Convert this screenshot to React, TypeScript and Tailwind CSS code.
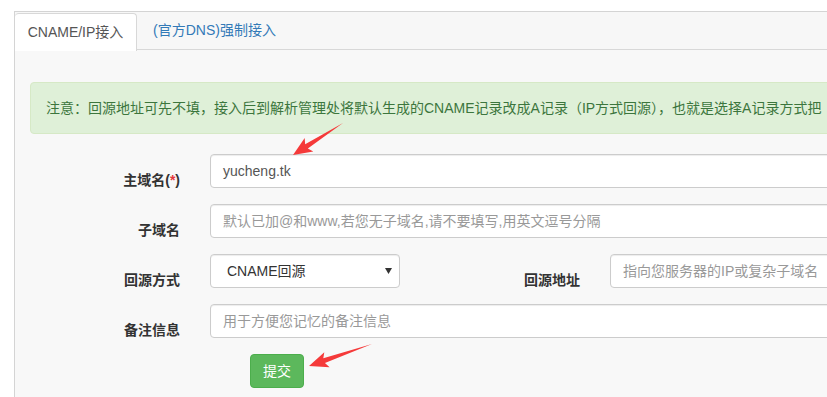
import React from "react";

type Pt = [number, number];

// red annotation arrow drawn over the form
const Arrow: React.FC<{ from: Pt; to: Pt }> = ({ from, to }) => {
  const dx = to[0] - from[0];
  const dy = to[1] - from[1];
  const len = Math.hypot(dx, dy);
  const ux = dx / len;
  const uy = dy / len;
  const nx = -uy;
  const ny = ux;
  const headLen = 19;
  const at = (t: number, w: number): string =>
    `${from[0] + ux * t + nx * w},${from[1] + uy * t + ny * w}`;
  const points = [
    at(0, 0),
    at(len - headLen + 3, 2.5),
    at(len - headLen, 8),
    at(len, 0),
    at(len - headLen, -8),
    at(len - headLen + 3, -2.5),
  ].join(" ");
  return <polygon points={points} fill="#f53a3a" />;
};

const Label: React.FC<{ width: string; children: React.ReactNode }> = ({
  width,
  children,
}) => (
  <div
    className={`${width} h-[34px] shrink-0 pr-[30px] pt-[16px] text-right text-[14px] font-bold leading-[20px] text-[#333] whitespace-nowrap`}
  >
    {children}
  </div>
);

const Input: React.FC<{ value?: string; placeholder?: string; width: string }> = ({
  value,
  placeholder,
  width,
}) => (
  <div
    className={`${width} h-[34px] shrink-0 rounded border border-[#ccc] bg-white px-3 text-[14px] leading-[32px] shadow-[inset_0_1px_1px_rgba(0,0,0,0.075)] whitespace-nowrap overflow-hidden`}
  >
    {value ? (
      <span className="text-[#555]">{value}</span>
    ) : (
      <span className="text-[#999]">{placeholder}</span>
    )}
  </div>
);

export default function App() {
  return (
    <div
      className="relative w-[827px] h-[397px] overflow-hidden bg-white pt-[11px] pl-[14px]"
      style={{ fontFamily: '"Liberation Sans", "Noto Sans CJK SC", sans-serif' }}
    >
      <div className="w-[1000px] h-[420px] border border-[#d4d4d4] bg-[#f8f8f8]">
        {/* tabs */}
        <div className="flex h-[38px] border-b border-[#d8d8d8] bg-[#f7f7f7]">
          <div className="mt-[1px] mb-[-1px] flex h-[38px] w-[122px] items-center justify-center rounded-t border border-b-0 border-l-0 border-[#d8d8d8] bg-white text-[14px] text-[#555]">
            CNAME/IP接入
          </div>
          <div className="flex items-center pl-[16px] text-[14px] text-[#337ab7]">
            (官方DNS)强制接入
          </div>
        </div>

        <div className="px-[15px] pt-[32px]">
          <div className="rounded border border-[#d6e9c6] bg-[#dff0d8] px-[15px] py-[15px] text-[14px] leading-[20px] text-[#3c763d] whitespace-nowrap overflow-hidden">
            注意：回源地址可先不填，接入后到解析管理处将默认生成的CNAME记录改成A记录（IP方式回源），也就是选择A记录方式把
          </div>

          <div className="mt-[20px] flex flex-col gap-[16px]">
            <div className="flex items-start">
              <Label width="w-[180px]">
                主域名(<span className="text-[#e4393c]">*</span>)
              </Label>
              <Input width="w-[760px]" value="yucheng.tk" />
            </div>

            <div className="flex items-start">
              <Label width="w-[180px]">子域名</Label>
              <Input
                width="w-[760px]"
                placeholder="默认已加@和www,若您无子域名,请不要填写,用英文逗号分隔"
              />
            </div>

            <div className="flex items-start">
              <Label width="w-[180px]">回源方式</Label>
              <div className="flex h-[34px] w-[190px] shrink-0 items-center justify-between rounded border border-[#ccc] bg-white pl-[16px] pr-[7px] text-[14px] text-[#333] shadow-[inset_0_1px_1px_rgba(0,0,0,0.075)]">
                <span>CNAME回源</span>
                <svg width="7" height="6" viewBox="0 0 7 6">
                  <polygon points="0,0 7,0 3.5,6" fill="#333" />
                </svg>
              </div>
              <Label width="w-[210px]">回源地址</Label>
              <Input width="w-[360px]" placeholder="指向您服务器的IP或复杂子域名" />
            </div>

            <div className="flex items-start">
              <Label width="w-[180px]">备注信息</Label>
              <Input width="w-[760px]" placeholder="用于方便您记忆的备注信息" />
            </div>

            <div className="flex pl-[220px]">
              <button className="h-[34px] rounded border border-[#4cae4c] bg-[#5cb85c] px-3 text-[14px] text-white">
                提交
              </button>
            </div>
          </div>
        </div>
      </div>

      <svg
        className="pointer-events-none absolute left-0 top-0"
        width="827"
        height="397"
      >
        <Arrow from={[343, 123]} to={[293, 155]} />
        <Arrow from={[372, 344]} to={[309, 366]} />
      </svg>
    </div>
  );
}
